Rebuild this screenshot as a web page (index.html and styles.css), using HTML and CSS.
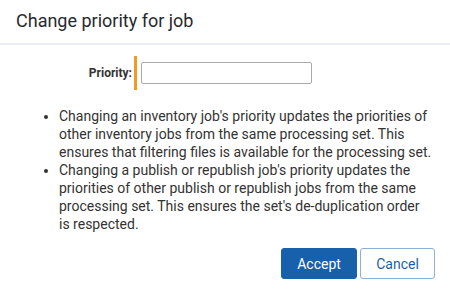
FILE: index.html
```html
<!DOCTYPE html>
<html>
<head>
<meta charset="utf-8">
<link rel="stylesheet" href="styles.css">
</head>
<body>
<div class="dialog">
  <div class="header"><h1 class="title">Change priority for job</h1></div>
  <div class="content">
    <div class="field">
      <label class="label" for="prio">Priority:</label>
      <span class="required"></span>
      <input class="input" id="prio" type="text">
    </div>
    <ul class="notes">
      <li>Changing an inventory job's priority updates the priorities of other inventory jobs from the same processing set. This ensures that filtering files is available for the processing set.</li>
      <li>Changing a publish or republish job's priority updates the priorities of other publish or republish jobs from the same processing set. This ensures the set's de-duplication order<br>is respected.</li>
    </ul>
  </div>
  <div class="footer">
    <button class="btn btn-primary">Accept</button>
    <button class="btn btn-secondary">Cancel</button>
  </div>
</div>
</body>
</html>
```
FILE: styles.css
```css
html, body {
  margin: 0;
  padding: 0;
  background: #fff;
}
body {
  font-family: Roboto, "Liberation Sans", sans-serif;
  color: #333;
}
.dialog {
  width: 450px;
  height: 291px;
  display: flex;
  flex-direction: column;
}
.header {
  height: 43px;
  border-bottom: 2px solid #eaeff5;
  display: flex;
  align-items: center;
  padding-left: 16px;
  box-sizing: content-box;
}
.title {
  margin: 0;
  font-size: 18px;
  font-weight: 400;
  color: #262a30;
  position: relative;
  top: -1px;
}
.content {
  padding-top: 11px;
}
.field {
  display: flex;
  align-items: center;
  height: 34px;
}
.label {
  width: 134px;
  text-align: right;
  font-size: 12px;
  font-weight: 700;
  color: #333;
  padding-right: 2px;
  box-sizing: border-box;
}
.required {
  width: 3px;
  height: 34px;
  background: #f39a1f;
  margin-right: 4px;
}
.input {
  width: 171px;
  height: 22px;
  box-sizing: border-box;
  border: 1px solid #a9a9a9;
  border-radius: 2px;
  margin: 0;
  padding: 2px 4px;
  font-family: inherit;
}
.notes {
  margin: 17px 0 0 0;
  padding-left: 59px;
  width: 437px;
  box-sizing: border-box;
  font-size: 14px;
  line-height: 18px;
  color: #333;
}
.footer {
  display: flex;
  justify-content: flex-end;
  gap: 3px;
  padding-right: 15px;
  margin-top: 15px;
}
.btn {
  height: 31px;
  width: 76px;
  font-family: inherit;
  font-size: 14px;
  border-radius: 3px;
  margin: 0;
  padding: 0;
}
.btn-primary {
  background: #1760ab;
  border: 1px solid #1760ab;
  color: #fff;
}
.btn-secondary {
  width: 75px;
  background: #fff;
  border: 1px solid #8db0d9;
  color: #1d5fa5;
}
```
